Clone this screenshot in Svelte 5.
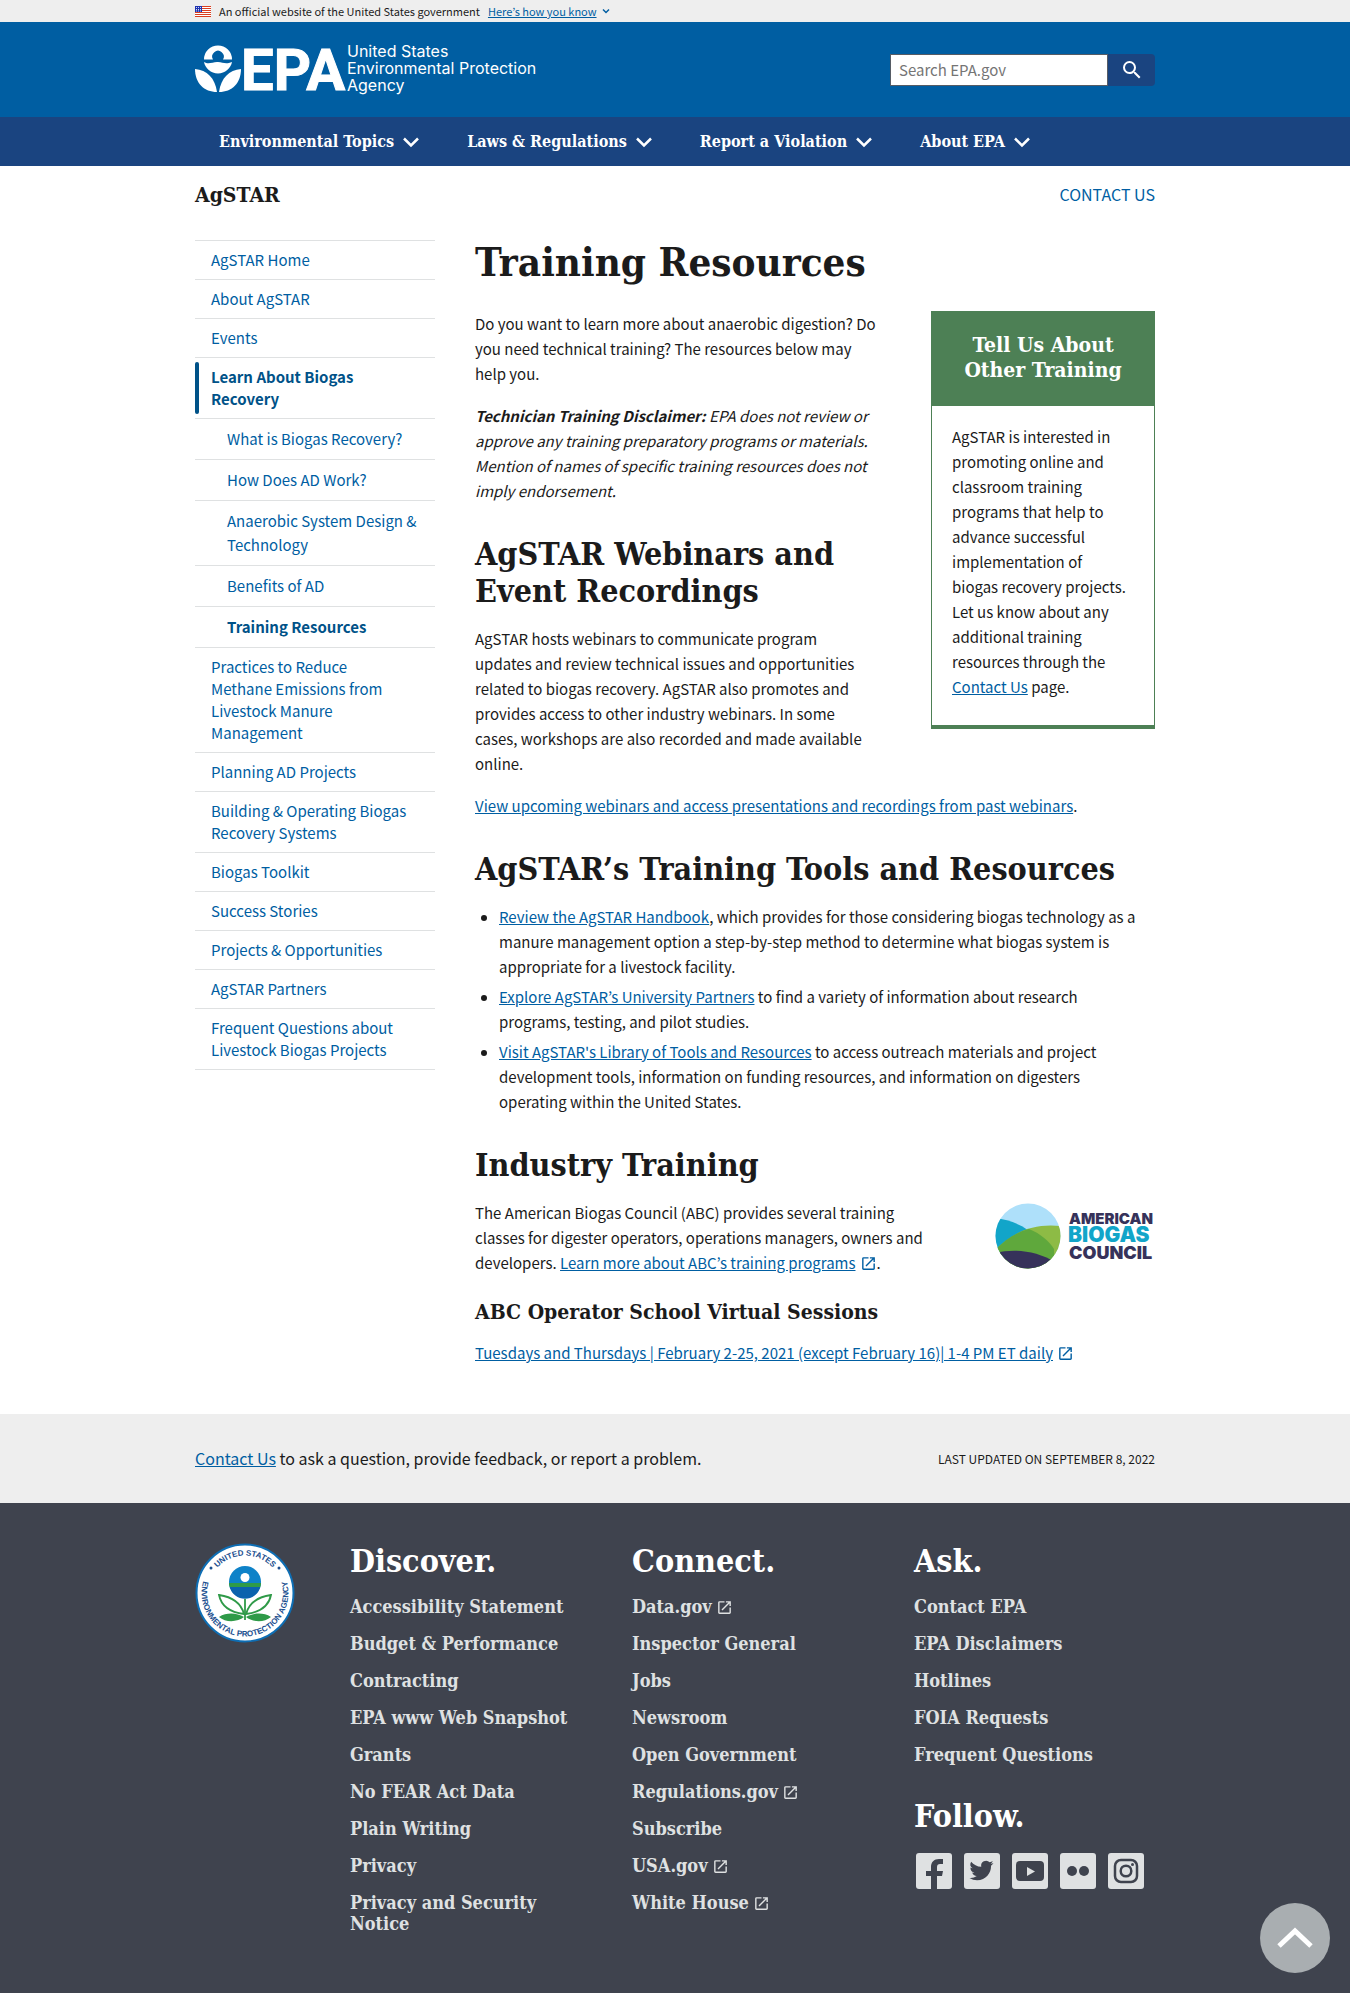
<script>
  const topics = ['Environmental Topics', 'Laws & Regulations', 'Report a Violation', 'About EPA'];

  const sideNav = [
    { label: 'AgSTAR Home' },
    { label: 'About AgSTAR' },
    { label: 'Events' },
    {
      label: 'Learn About Biogas Recovery',
      current: true,
      children: [
        { label: 'What is Biogas Recovery?' },
        { label: 'How Does AD Work?' },
        { label: 'Anaerobic System Design & Technology' },
        { label: 'Benefits of AD' },
        { label: 'Training Resources', current: true }
      ]
    },
    { label: 'Practices to Reduce Methane Emissions from Livestock Manure Management' },
    { label: 'Planning AD Projects' },
    { label: 'Building & Operating Biogas Recovery Systems' },
    { label: 'Biogas Toolkit' },
    { label: 'Success Stories' },
    { label: 'Projects & Opportunities' },
    { label: 'AgSTAR Partners' },
    { label: 'Frequent Questions about Livestock Biogas Projects' }
  ];

  const discover = [
    'Accessibility Statement', 'Budget & Performance', 'Contracting', 'EPA www Web Snapshot',
    'Grants', 'No FEAR Act Data', 'Plain Writing', 'Privacy', 'Privacy and Security Notice'
  ];
  const connect = [
    { label: 'Data.gov', external: true },
    { label: 'Inspector General' },
    { label: 'Jobs' },
    { label: 'Newsroom' },
    { label: 'Open Government' },
    { label: 'Regulations.gov', external: true },
    { label: 'Subscribe' },
    { label: 'USA.gov', external: true },
    { label: 'White House', external: true }
  ];
  const ask = ['Contact EPA', 'EPA Disclaimers', 'Hotlines', 'FOIA Requests', 'Frequent Questions'];
  const stripes = [0, 2, 4, 6, 8, 10];
</script>

{#snippet externalIcon()}
  <svg class="external" viewBox="0 0 24 24" aria-hidden="true"><path d="M19 19H5V5h7V3H5a2 2 0 0 0-2 2v14c0 1.1.89 2 2 2h14c1.1 0 2-.9 2-2v-7h-2v7zM14 3v2h3.59l-9.83 9.83 1.41 1.41L19 6.41V10h2V3h-7z" /></svg>
{/snippet}

<section class="banner">
  <div class="wrap banner-row">
    <svg class="flag" viewBox="0 0 16 11" aria-hidden="true">
      <rect width="16" height="11" fill="#fff" />
      {#each stripes as y}<rect {y} width="16" height="1" fill="#db3e1f" />{/each}
      <rect width="7" height="6" fill="#1e33b1" />
      <path d="M1 1.5h5M1 3.5h5M1 5h5" stroke="#fff" stroke-width=".8" stroke-dasharray="1 1" />
    </svg>
    <span>An official website of the United States government</span>
    <button class="know"><u>Here’s how you know</u>
      <svg viewBox="0 0 10 10" aria-hidden="true"><path d="M2 3.5l3 3 3-3" /></svg>
    </button>
  </div>
</section>

<header class="masthead">
  <div class="wrap masthead-row">
    <a class="logo" href="#home" aria-label="US EPA">
      <svg viewBox="0 0 352 50" role="img" aria-label="United States Environmental Protection Agency">
        <g fill="#fff">
          <path d="M9 14.500a14 14 0 0 1 28 0h-9a5.800 5.800 0 1 0-10 0z" />
          <circle cx="23" cy="12" r="4" fill="#005ea2" />
          <path d="M9 17c5 3 9-.5 14 0s8 2.500 14 0c-1 6-7 11.500-14 11.500S10 23 9 17z" />
          <path d="M0 24c12 1 20 9 22 23C9 47 0 38 0 24z" />
          <path d="M46 24c-12 1-20 9-22 23 13 0 22-9 22-23z" />
          <text x="46" y="45" class="epa">EPA</text>
          <text class="tag"><tspan x="152" y="12">United States</tspan><tspan x="152" y="29">Environmental Protection</tspan><tspan x="152" y="46">Agency</tspan></text>
        </g>
      </svg>
    </a>
    <form class="search" role="search">
      <input type="search" placeholder="Search EPA.gov" aria-label="Search EPA.gov" />
      <button type="button" aria-label="Search">
        <svg viewBox="0 0 24 24" aria-hidden="true"><path fill="#fff" d="M15.500 14h-.79l-.28-.27A6.470 6.470 0 0 0 16 9.500 6.500 6.500 0 1 0 9.500 16c1.610 0 3.090-.59 4.230-1.570l.27.28v.79l5 4.990L20.490 19l-4.990-5zm-6 0C7.010 14 5 11.990 5 9.500S7.010 5 9.500 5 14 7.010 14 9.500 11.990 14 9.500 14z" /></svg>
      </button>
    </form>
  </div>
</header>

<nav class="topnav" aria-label="Primary">
  <div class="wrap topnav-row">
    {#each topics as topic}
      <button>{topic}<svg viewBox="0 0 16 16" aria-hidden="true"><path d="M1 4.500l7 7 7-7" /></svg></button>
    {/each}
  </div>
</nav>

<div class="wrap page">
  <div class="site-row">
    <div class="site-name">AgSTAR</div>
    <a class="contact" href="#contact">CONTACT US</a>
  </div>

  <div class="columns">
    <nav class="sidenav" aria-label="Section">
      <ul>
        {#each sideNav as item}
          <li>
            <a href="#section" class:current={item.current}>{item.label}</a>
            {#if item.children}
              <ul class="sub">
                {#each item.children as child}
                  <li><a href="#section" class:current={child.current}>{child.label}</a></li>
                {/each}
              </ul>
            {/if}
          </li>
        {/each}
      </ul>
    </nav>

    <main>
      <h1>Training Resources</h1>
      <aside class="card">
        <h2>Tell Us About Other Training</h2>
        <p>AgSTAR is interested in promoting online and classroom training programs that help to advance successful implementation of biogas&nbsp;recovery&nbsp;projects. Let us know about any additional training resources through the <a href="#contact">Contact Us</a> page.</p>
      </aside>
      <p>Do you want to learn more about anaerobic digestion? Do you need technical training? The resources below may help&nbsp;you.</p>
      <p class="disclaimer"><strong>Technician Training Disclaimer:</strong> EPA does not review or approve any training preparatory programs or materials. Mention of names of specific training resources does not imply endorsement.</p>
      <h2>AgSTAR Webinars and Event Recordings</h2>
      <p>AgSTAR hosts webinars to communicate program updates&nbsp;and&nbsp;review technical issues and opportunities related to biogas recovery. AgSTAR also promotes and provides access to other industry webinars. In some cases,&nbsp;workshops are also recorded and made available online.</p>
      <p><a href="#webinars">View upcoming webinars and access presentations and recordings from past webinars</a>.</p>
      <h2>AgSTAR’s Training Tools and Resources</h2>
      <ul class="bullets">
        <li><a href="#handbook">Review the AgSTAR Handbook</a>, which provides for those considering biogas technology as a manure management option a step-by-step method to determine what biogas system is appropriate for a livestock facility.</li>
        <li><a href="#partners">Explore AgSTAR’s University Partners</a> to find a variety of information about research programs, testing, and pilot studies.</li>
        <li><a href="#library">Visit AgSTAR's Library of Tools and Resources</a> to access outreach materials and project development tools, information on funding resources, and information on digesters operating within the United States.</li>
      </ul>
      <h2>Industry Training</h2>
      <svg class="abc" viewBox="0 -3 160 72" role="img" aria-label="American Biogas Council">
        <defs><clipPath id="abc-disc"><circle cx="33" cy="33" r="32.500" /></clipPath></defs>
        <g clip-path="url(#abc-disc)">
          <rect width="66" height="66" fill="#aee0fa" />
          <path d="M0 15c17 2 32 9 42 20L0 60z" fill="#12a5c9" />
          <path d="M0 47C18 29 38 20 66 23v43H0z" fill="#8dbb45" />
          <path d="M0 47c10-10 22-18 34-21 12 5 20 12 25 20v20H0z" fill="#5fa83c" />
          <path d="M0 50c20-5 42-2 60 9v7H0z" fill="#36325a" />
        </g>
        <g class="abc-text">
          <text x="74" y="21" font-size="15" fill="#36325a">AMERICAN</text>
          <text x="73" y="39" font-size="21" fill="#12a5c9">BIOGAS</text>
          <text x="74" y="56" font-size="18" fill="#36325a">COUNCIL</text>
        </g>
      </svg>
      <p>The American Biogas Council (ABC) provides several training classes for digester operators, operations managers, owners and developers. <a href="#abc">Learn more about ABC’s training programs</a>{@render externalIcon()}.</p>
      <h3>ABC Operator School Virtual Sessions</h3>
      <p><a href="#sessions">Tuesdays and Thursdays | February 2-25, 2021 (except February 16)| 1-4 PM ET daily</a>{@render externalIcon()}</p>
    </main>
  </div>
</div>

<div class="feedback">
  <div class="wrap feedback-row">
    <div><a href="#contact">Contact Us</a> to ask a question, provide feedback, or report a problem.</div>
    <div class="updated">LAST UPDATED ON SEPTEMBER 8, 2022</div>
  </div>
</div>

<footer>
  <div class="wrap footer-grid">
    <svg class="seal" viewBox="0 0 100 100" role="img" aria-label="EPA seal">
      <defs>
        <path id="seal-top" d="M12.500 50a37.500 37.500 0 0 1 75 0" />
        <path id="seal-bottom" d="M11.600 29.800a43.400 43.400 0 1 0 76.800 0" />
      </defs>
      <circle cx="50" cy="50" r="48.500" fill="#fff" stroke="#0e6eb4" stroke-width="2" />
      <g class="seal-text">
        <text text-anchor="middle"><textPath href="#seal-top" startOffset="50%">UNITED STATES</textPath></text>
        <text text-anchor="middle"><textPath href="#seal-bottom" startOffset="50%">ENVIRONMENTAL PROTECTION AGENCY</textPath></text>
      </g>
      <circle cx="16" cy="25" r="1.500" fill="#1b4f8f" /><circle cx="84" cy="25" r="1.500" fill="#1b4f8f" />
      <circle cx="50" cy="39" r="16" fill="#0e82c8" />
      <path d="M34 40h32a16 16 0 0 1-.6 4H34.600a16 16 0 0 1-.6-4z" fill="#2f9a48" />
      <path d="M34.600 44h30.800a16 16 0 0 1-30.800 0z" fill="#0b62ad" />
      <circle cx="50" cy="34.500" r="4.500" fill="#fff" />
      <g fill="none" stroke="#2f9a48" stroke-width="1.800">
        <path d="M50 56v21" />
        <path d="M49 71c-3-11-11-17-25-19 2 10 9 17 25 19z" />
        <path d="M51 71c3-11 11-17 25-19-2 10-9 17-25 19z" />
      </g>
      <path d="M49 74c-7-4-17-5-25 0 7 6 19 5 25 0zM51 74c7-4 17-5 25 0-7 6-19 5-25 0z" fill="#2f9a48" />
    </svg>

    <section>
      <h2>Discover.</h2>
      <ul>{#each discover as label}<li><a href="#discover">{label}</a></li>{/each}</ul>
    </section>
    <section>
      <h2>Connect.</h2>
      <ul>
        {#each connect as item}
          <li><a href="#connect">{item.label}{#if item.external}{@render externalIcon()}{/if}</a></li>
        {/each}
      </ul>
    </section>
    <section>
      <h2>Ask.</h2>
      <ul>{#each ask as label}<li><a href="#ask">{label}</a></li>{/each}</ul>
      <h2 class="follow">Follow.</h2>
      <div class="social">
        <a href="#facebook" aria-label="Facebook"><svg viewBox="0 0 36 36"><rect width="36" height="36" rx="3" /><path class="ink" d="M15 36V23h-5v-5h5v-4c0-5 3-8 8-8h4v5h-3c-2 0-3 1-3 3v4h6l-1 5h-5v13z" /></svg></a>
        <a href="#twitter" aria-label="Twitter"><svg viewBox="0 0 36 36"><rect width="36" height="36" rx="3" /><path class="ink" transform="translate(5.500 5.500)" d="M23.950 4.570a10 10 0 0 1-2.820.77 4.960 4.960 0 0 0 2.160-2.720c-.95.56-2 .96-3.130 1.180a4.920 4.920 0 0 0-8.380 4.480C7.690 8.100 4.070 6.130 1.640 3.160a4.930 4.930 0 0 0 1.520 6.570 4.900 4.900 0 0 1-2.230-.61v.06a4.930 4.930 0 0 0 3.950 4.830 5 5 0 0 1-2.210.08 4.940 4.940 0 0 0 4.600 3.420A9.870 9.870 0 0 1 0 19.540a14 14 0 0 0 7.550 2.210c9.050 0 14-7.500 14-13.980 0-.21 0-.42-.02-.63a9.940 9.940 0 0 0 2.420-2.570z" /></svg></a>
        <a href="#youtube" aria-label="YouTube"><svg viewBox="0 0 36 36"><rect width="36" height="36" rx="3" /><rect class="ink" x="4" y="8" width="28" height="20" rx="4" /><path d="M15 14v9l8-4.500z" /></svg></a>
        <a href="#flickr" aria-label="Flickr"><svg viewBox="0 0 36 36"><rect width="36" height="36" rx="3" /><circle class="ink" cx="12" cy="18" r="5" /><circle class="ink" cx="24" cy="18" r="5" /></svg></a>
        <a href="#instagram" aria-label="Instagram"><svg viewBox="0 0 36 36"><rect width="36" height="36" rx="3" /><g class="line"><rect x="7" y="7" width="22" height="22" rx="6" /><circle cx="18" cy="18" r="5.300" /></g><circle class="ink" cx="24.500" cy="11.500" r="1.500" /></svg></a>
      </div>
    </section>
  </div>
</footer>

<a class="to-top" href="#top" aria-label="Back to top"><svg viewBox="0 0 36 24" aria-hidden="true"><path d="M2 20L18 5l16 15" /></svg></a>

<style>
  :global(body) {
    --serif: 'DejaVu Serif Condensed', 'DejaVu Serif', serif;
    color: #1b1b1b;
    background: #fff;
    font-family: 'Noto Sans CJK KR', 'Noto Sans', sans-serif;
    font-size: 15px;
    line-height: 25px;
  }
  :global(#app) { display: flex; flex-direction: column; min-height: 100vh; }
  a { color: #005ea2; }
  button { border: 0; padding: 0; background: none; font: inherit; color: inherit; cursor: pointer; }
  ul { list-style: none; margin: 0; padding: 0; }
  h1, h2, h3, .site-name { margin: 0; font-family: var(--serif); font-weight: 700; }
  svg { display: block; }
  .wrap { box-sizing: border-box; width: 100%; max-width: 992px; margin: 0 auto; padding: 0 16px; }

  .banner { background: #eee; font-size: 11px; line-height: 22px; }
  .banner-row { display: flex; align-items: center; gap: 8px; }
  .flag { width: 16px; height: 11px; }
  .know { display: flex; align-items: center; gap: 4px; color: #005ea2; }
  .know svg { width: 10px; height: 10px; fill: none; stroke: #005ea2; stroke-width: 1.5; }

  .masthead { background: #005ea2; }
  .masthead-row { display: flex; justify-content: space-between; align-items: center; height: 95px; }
  .logo svg { width: 352px; height: 50px; overflow: visible; }
  .epa { font: 700 58px Roboto, sans-serif; stroke: #fff; stroke-width: 1px; }
  .tag { font: 400 16px Inter, sans-serif; }
  .search { display: flex; }
  .search input {
    box-sizing: border-box; width: 218px; height: 32px; padding: 0 8px; border: 1px solid #565c65;
    border-radius: 0; font: inherit; background: #fff; appearance: none;
  }
  .search input::placeholder { color: #757575; opacity: 1; }
  .search button { display: grid; place-items: center; width: 47px; height: 32px; background: #1a4480; border-radius: 0 4px 4px 0; }
  .search svg { width: 24px; height: 24px; }

  .topnav { background: #1a4480; color: #fff; font-family: var(--serif); font-weight: 700; font-size: 16px; }
  .topnav-row { display: flex; }
  .topnav button { display: flex; align-items: center; gap: 9px; padding: 12px 24px; }
  .topnav svg { width: 16px; height: 16px; fill: none; stroke: #fff; stroke-width: 2.5; }

  .site-row { display: flex; justify-content: space-between; align-items: center; padding: 16px 0 33px; }
  .site-name { font-size: 21px; }
  .contact { font-size: 16px; text-decoration: none; }

  .columns { display: grid; grid-template-columns: 240px minmax(0, 1fr); gap: 40px; padding-bottom: 32px; }
  .sidenav { line-height: 22px; }
  .sidenav > ul { border-bottom: 1px solid #dfe1e2; }
  .sidenav li { border-top: 1px solid #dfe1e2; }
  .sidenav a { display: block; position: relative; padding: 8px 26px 8px 16px; text-decoration: none; }
  .sidenav .current { font-weight: 700; color: #005288; }
  .sidenav > ul > li > .current::before {
    content: ''; position: absolute; left: 0; top: 4px; bottom: 4px; width: 4px; border-radius: 4px; background: #005288;
  }
  .sub { line-height: 24px; }
  .sidenav .sub a { padding: 8px 12px 8px 32px; }

  main p { margin: 0 0 17px; }
  h1 { font-size: 40px; line-height: 44px; margin-bottom: 27px; }
  main h2 { font-size: 32px; line-height: 37px; margin: 33px 0 16px; }
  main h3 { font-size: 21px; line-height: 25px; margin: 24px 0 16px; }
  .disclaimer { font-style: italic; }
  .card { float: right; box-sizing: border-box; width: 224px; margin: 0 0 16px 40px; border: 1px solid #4d8055; border-bottom-width: 4px; }
  .card h2 { margin: 0; padding: 20px 20px 24px; background: #4d8055; color: #fff; font-size: 21px; line-height: 25px; text-align: center; }
  .card p { margin: 0; padding: 18px 20px 26px; }
  .bullets { list-style: disc; padding: 0 8px 0 24px; }
  .bullets li { margin-bottom: 5px; }
  .abc { float: right; width: 160px; height: 72px; margin-left: 48px; }
  .abc-text { font-family: Inter, sans-serif; font-weight: 900; }
  .external { display: inline-block; width: 17px; height: 17px; margin-left: 4px; vertical-align: -3px; fill: #005ea2; }

  .feedback { background: #eee; }
  .feedback-row { display: flex; justify-content: space-between; align-items: center; padding-top: 32px; padding-bottom: 32px; font-size: 16px; }
  .updated { font-size: 12px; }

  footer { flex: 1; background: #3f434e; color: #fff; padding: 40px 0; }
  .footer-grid { display: grid; grid-template-columns: 123px 250px 250px minmax(0, 1fr); column-gap: 32px; }
  .seal { width: 100px; height: 100px; }
  .seal-text { font: 700 8px 'Liberation Sans', sans-serif; fill: #1b4f8f; }
  footer h2 { font-size: 32px; line-height: 36px; margin-bottom: 17px; }
  footer li { padding-right: 16px; font-family: var(--serif); font-weight: 700; font-size: 18px; line-height: 21px; margin-bottom: 16px; }
  footer li a { color: #dfe1e2; text-decoration: none; }
  footer .external { fill: #dfe1e2; }
  footer .follow { margin-top: 33px; }
  .social { display: flex; gap: 12px; padding: 2px 2px 0; }
  .social svg { width: 36px; height: 36px; fill: #dfe1e2; }
  .social .ink { fill: #3f434e; }
  .social .line { fill: none; stroke: #3f434e; stroke-width: 2.5; }

  .to-top { position: fixed; right: 20px; bottom: 20px; display: grid; place-items: center; width: 70px; height: 70px; border-radius: 50%; background: #a9aeb1; }
  .to-top svg { width: 36px; height: 24px; fill: none; stroke: #fff; stroke-width: 5; }
</style>
